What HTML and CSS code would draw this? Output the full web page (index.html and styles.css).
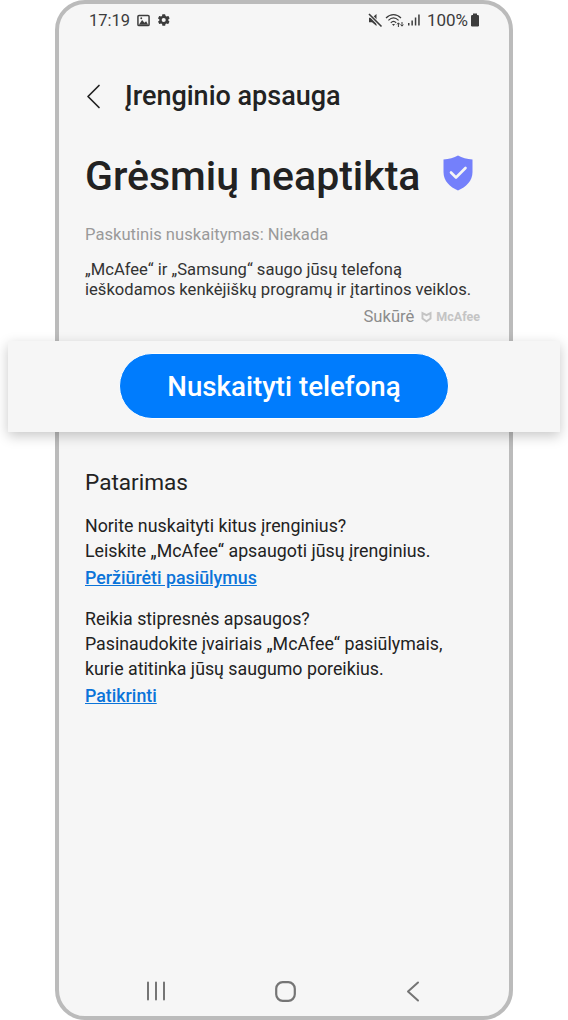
FILE: index.html
```html
<!DOCTYPE html>
<html lang="lt">
<head>
    <meta charset="UTF-8">
    <meta name="viewport" content="width=device-width, initial-scale=1.0">
    <title>Įrenginio apsauga</title>
    <link rel="stylesheet" href="styles.css">
</head>
<body>

<div class="phone">
    <!-- Status bar -->
    <div class="status-bar">
        <div class="status-left">
            <span class="clock">17:19</span>
            <svg class="status-icon" width="13" height="13" viewBox="0 0 14 14">
                <rect x="1" y="1.5" width="12" height="11" rx="1.2" fill="none" stroke="#3c3c3c" stroke-width="1.6"/>
                <path d="M2 11.5 L5.5 6.5 L8 9.5 L9.8 7.8 L12 11.5 Z" fill="#3c3c3c"/>
                <circle cx="4.6" cy="4.6" r="1" fill="#3c3c3c"/>
            </svg>
            <svg class="status-icon" width="14" height="14" viewBox="0 0 24 24">
                <path fill="#3c3c3c" d="M19.4 13a7.6 7.6 0 0 0 0-2l2.1-1.6a.5.5 0 0 0 .1-.6l-2-3.5a.5.5 0 0 0-.6-.2l-2.5 1a7.3 7.3 0 0 0-1.7-1L14 2.4a.5.5 0 0 0-.5-.4h-4a.5.5 0 0 0-.5.4l-.4 2.7a7.3 7.3 0 0 0-1.7 1l-2.5-1a.5.5 0 0 0-.6.2l-2 3.5a.5.5 0 0 0 .1.6L4.1 11a7.6 7.6 0 0 0 0 2L2 14.6a.5.5 0 0 0-.1.6l2 3.5c.1.2.4.3.6.2l2.5-1c.5.4 1.1.7 1.7 1l.4 2.7c0 .2.2.4.5.4h4c.3 0 .5-.2.5-.4l.4-2.7c.6-.3 1.2-.6 1.7-1l2.5 1c.2.1.5 0 .6-.2l2-3.5a.5.5 0 0 0-.1-.6zM11.5 15.5a3.5 3.5 0 1 1 0-7 3.5 3.5 0 0 1 0 7z"/>
            </svg>
        </div>
        <div class="status-right">
            <svg class="status-icon" width="16" height="16" viewBox="0 0 16 16">
                <path d="M2 5.8 H5 L9.5 2 V14 L5 10.2 H2 Z" fill="#3c3c3c"/>
                <path d="M2 2 L14.5 14.5" stroke="#f6f6f6" stroke-width="3.2"/>
                <path d="M2 2 L14.5 14.5" stroke="#3c3c3c" stroke-width="1.6"/>
            </svg>
            <svg class="status-icon wifi" width="20" height="16" viewBox="0 0 20 16">
                <g fill="none" stroke="#3c3c3c" stroke-width="1.2">
                    <path d="M1 6 C5.5 1.5 11.5 1.5 16 6"/>
                    <path d="M3.4 8.4 C6.6 5.2 10.4 5.2 13.6 8.4"/>
                    <path d="M5.8 10.8 C7.6 9 9.4 9 11.2 10.8"/>
                </g>
                <path d="M8.5 14 L7 12 H10 Z" fill="#3c3c3c"/>
                <path d="M13.4 15 V11 M12 12.4 L13.4 10.8 L14.8 12.4 M17 10 V14 M15.6 12.6 L17 14.2 L18.4 12.6" fill="none" stroke="#3c3c3c" stroke-width="1"/>
            </svg>
            <svg class="status-icon" width="14" height="14" viewBox="0 0 14 14">
                <g fill="#3c3c3c">
                    <rect x="1" y="10" width="1.5" height="2.5"/>
                    <rect x="4.4" y="7.5" width="1.5" height="5"/>
                    <rect x="7.8" y="4.5" width="1.5" height="8"/>
                    <rect x="11.2" y="1.5" width="1.5" height="11"/>
                </g>
            </svg>
            <span class="battery-text">100%</span>
            <svg class="status-icon" width="10" height="14" viewBox="0 0 10 14">
                <rect x="3" y="0.5" width="4" height="2" fill="#3c3c3c"/>
                <rect x="1" y="2" width="8" height="11.5" rx="1.2" fill="#3c3c3c"/>
            </svg>
        </div>
    </div>

    <!-- Header -->
    <div class="app-bar">
        <svg class="back" width="15" height="25" viewBox="0 0 15 25">
            <path d="M13 1.5 L2 12.5 L13 23.5" fill="none" stroke="#222" stroke-width="1.7" stroke-linecap="round" stroke-linejoin="round"/>
        </svg>
        <h1 class="app-title">Įrenginio apsauga</h1>
    </div>

    <div class="content">
        <div class="result">
            <h2 class="result-title">Grėsmių neaptikta</h2>
            <svg class="shield" width="30" height="36" viewBox="0 0 30 36">
                <path d="M15 0.5 C19 2.8 24 4 29.5 4.5 V17 C29.5 26 23 32 15 35.5 C7 32 0.5 26 0.5 17 V4.5 C6 4 11 2.8 15 0.5 Z" fill="#7480fb"/>
                <path d="M8 17.5 L13 22.5 L22.5 13" fill="none" stroke="#f5f5f5" stroke-width="2.6" stroke-linecap="round" stroke-linejoin="round"/>
            </svg>
        </div>
        <p class="last-scan">Paskutinis nuskaitymas: Niekada</p>
        <p class="desc">„McAfee“ ir „Samsung“ saugo jūsų telefoną<br>ieškodamos kenkėjiškų programų ir įtartinos veiklos.</p>
        <div class="credit">
            <span>Sukūrė</span>
            <svg class="credit-logo" width="11" height="12" viewBox="0 0 11 12">
                <path d="M0.5 0.5 L5.5 3 L10.5 0.5 V8 L5.5 11.5 L0.5 8 Z M2.4 3.8 V7 L5.5 9.2 L8.6 7 V3.8 L5.5 5.3 Z" fill="#c4c4c4" fill-rule="evenodd"/>
            </svg>
            <span class="mcafee">McAfee</span>
        </div>
    </div>

    <!-- Highlighted action -->
    <div class="action-band">
        <button class="scan-btn">Nuskaityti telefoną</button>
    </div>

    <div class="tips">
        <h3 class="tips-title">Patarimas</h3>
        <p class="tip">Norite nuskaityti kitus įrenginius?<br>Leiskite „McAfee“ apsaugoti jūsų įrenginius.</p>
        <a class="tip-link" href="#">Peržiūrėti pasiūlymus</a>
        <p class="tip tip-second">Reikia stipresnės apsaugos?<br>Pasinaudokite įvairiais „McAfee“ pasiūlymais,<br>kurie atitinka jūsų saugumo poreikius.</p>
        <a class="tip-link" href="#">Patikrinti</a>
    </div>

    <!-- Navigation bar -->
    <div class="nav-bar">
        <svg width="20" height="20" viewBox="0 0 20 20">
            <path d="M3 1.5 V18.5 M11 1.5 V18.5 M19 1.5 V18.5" stroke="#757575" stroke-width="2" stroke-linecap="round"/>
        </svg>
        <svg width="21" height="21" viewBox="0 0 21 21">
            <rect x="1.2" y="1.2" width="18.6" height="18.6" rx="6.5" fill="none" stroke="#757575" stroke-width="2.2"/>
        </svg>
        <svg width="14" height="21" viewBox="0 0 14 21">
            <path d="M12 1.5 L2 10.5 L12 19.5" fill="none" stroke="#757575" stroke-width="2" stroke-linecap="round" stroke-linejoin="round"/>
        </svg>
    </div>
</div>

</body>
</html>
```

FILE: styles.css
```css
* {
    box-sizing: border-box;
}

body {
    font-family: Roboto, Arial, sans-serif;
    margin: 0;
    padding: 0;
    background-color: white;
    overflow: hidden;
}

.phone {
    display: flex;
    flex-direction: column;
    width: 458px;
    height: 1020px;
    margin-left: 55px;
    background-color: #f6f6f6;
    border: 4px solid #bbb;
    border-radius: 30px;
}

.status-bar {
    display: flex;
    justify-content: space-between;
    align-items: center;
    height: 26px;
    margin-top: 3px;
    padding: 0 29px 0 30px;
    color: #3c3c3c;
}

.status-left,
.status-right {
    display: flex;
    align-items: center;
}

.status-left {
    gap: 7px;
}

.status-right {
    gap: 2px;
}

.clock {
    font-size: 16.5px;
}

.battery-text {
    font-size: 17px;
    margin-left: 4px;
}

.app-bar {
    display: flex;
    align-items: center;
    height: 40px;
    margin-top: 43px;
    padding-left: 27px;
}

.app-title {
    margin: 0 0 0 24px;
    font-size: 27px;
    font-weight: 500;
    color: #222;
}

.content {
    padding: 0 26px;
}

.result {
    display: flex;
    justify-content: space-between;
    align-items: center;
    margin-top: 36px;
    padding-right: 10px;
}

.result-title {
    margin: 0;
    font-size: 41px;
    font-weight: 500;
    color: #222;
}

.shield {
    margin-bottom: 6px;
}

.last-scan {
    margin: 25px 0 0;
    font-size: 16.6px;
    color: #9a9a9a;
}

.desc {
    margin: 16px 0 0;
    font-size: 16.6px;
    line-height: 19.5px;
    white-space: nowrap;
    color: #333;
}

.credit {
    display: flex;
    justify-content: flex-end;
    align-items: center;
    gap: 4px;
    margin-top: 8px;
    padding-right: 3px;
    font-size: 16.6px;
    color: #8c8c8c;
}

.credit-logo {
    margin-left: 3px;
}

.mcafee {
    font-size: 12.5px;
    font-weight: 700;
    color: #c4c4c4;
}

.action-band {
    display: flex;
    justify-content: center;
    width: 552px;
    height: 91px;
    margin: 15px 0 0 -51px;
    padding-top: 12px;
    background-color: #f6f6f6;
    box-shadow: 0 4px 12px rgba(0, 0, 0, 0.22);
    position: relative;
}

.scan-btn {
    width: 330px;
    height: 66px;
    border: 1px solid white;
    border-radius: 33px;
    background-color: #007cfd;
    color: white;
    font-family: inherit;
    font-size: 27.7px;
    font-weight: 500;
}

.tips {
    flex: 1;
    padding: 37px 26px 0;
}

.tips-title {
    margin: 0;
    font-size: 22.6px;
    font-weight: 400;
    color: #222;
}

.tip {
    margin: 17px 0 0;
    font-size: 17.8px;
    line-height: 25px;
    color: #222;
}

.tip-second {
    margin-top: 16px;
}

.tip-link {
    display: block;
    margin-top: 2px;
    font-size: 17.8px;
    font-weight: 500;
    line-height: 25px;
    color: #0b74d9;
}

.nav-bar {
    display: flex;
    justify-content: space-between;
    align-items: center;
    height: 22px;
    margin-bottom: 14px;
    padding: 0 89px 0 86px;
}
```
